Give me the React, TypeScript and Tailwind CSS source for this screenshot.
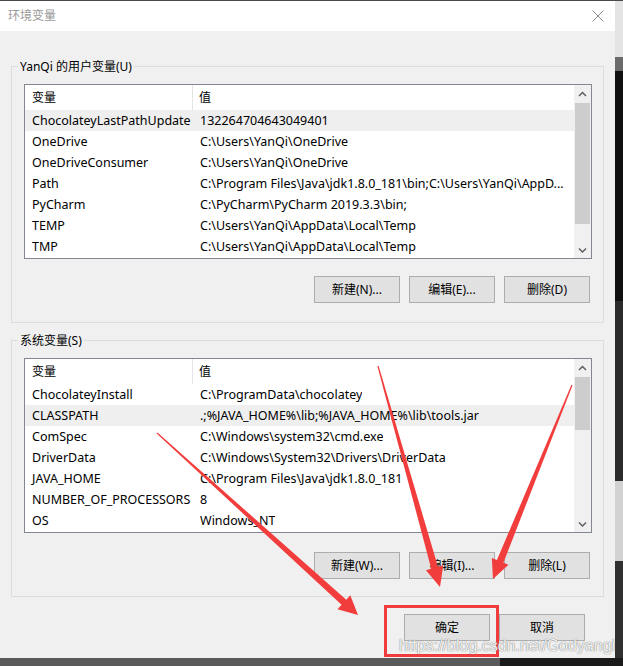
import React from "react";

type Row = [string, string];

const userVars: Row[] = [
  ["ChocolateyLastPathUpdate", "132264704643049401"],
  ["OneDrive", "C:\\Users\\YanQi\\OneDrive"],
  ["OneDriveConsumer", "C:\\Users\\YanQi\\OneDrive"],
  ["Path", "C:\\Program Files\\Java\\jdk1.8.0_181\\bin;C:\\Users\\YanQi\\AppD..."],
  ["PyCharm", "C:\\PyCharm\\PyCharm 2019.3.3\\bin;"],
  ["TEMP", "C:\\Users\\YanQi\\AppData\\Local\\Temp"],
  ["TMP", "C:\\Users\\YanQi\\AppData\\Local\\Temp"],
];

const systemVars: Row[] = [
  ["ChocolateyInstall", "C:\\ProgramData\\chocolatey"],
  ["CLASSPATH", ".;%JAVA_HOME%\\lib;%JAVA_HOME%\\lib\\tools.jar"],
  ["ComSpec", "C:\\Windows\\system32\\cmd.exe"],
  ["DriverData", "C:\\Windows\\System32\\Drivers\\DriverData"],
  ["JAVA_HOME", "C:\\Program Files\\Java\\jdk1.8.0_181"],
  ["NUMBER_OF_PROCESSORS", "8"],
  ["OS", "Windows_NT"],
];

// tapered shaft + triangle head, like a screenshot-tool arrow
function arrowPoints(x1: number, y1: number, x2: number, y2: number, w1: number, w2: number, hl: number, hw: number) {
  const dx = x2 - x1;
  const dy = y2 - y1;
  const len = Math.hypot(dx, dy);
  const ux = dx / len;
  const uy = dy / len;
  const nx = -uy;
  const ny = ux;
  const bx = x2 - ux * hl;
  const by = y2 - uy * hl;
  const pts = [
    [x1 + (nx * w1) / 2, y1 + (ny * w1) / 2],
    [bx + (nx * w2) / 2, by + (ny * w2) / 2],
    [bx + nx * hw, by + ny * hw],
    [x2, y2],
    [bx - nx * hw, by - ny * hw],
    [bx - (nx * w2) / 2, by - (ny * w2) / 2],
    [x1 - (nx * w1) / 2, y1 - (ny * w1) / 2],
  ];
  return pts.map((p) => p.join(",")).join(" ");
}

function Chevron({ down }: { down?: boolean }) {
  return (
    <svg width="9" height="6" viewBox="0 0 9 6">
      <path
        d={down ? "M1 1.5 L4.5 5 L8 1.5" : "M1 5 L4.5 1.5 L8 5"}
        fill="none"
        stroke="#606060"
        strokeWidth="1.5"
      />
    </svg>
  );
}

function VarList({ rows, selected, big }: { rows: Row[]; selected: number; big?: boolean }) {
  return (
    <div className="flex w-[568px] h-[175px] border border-[#828790] bg-white">
      <div className="flex-1 flex flex-col">
        <div className="flex h-[25px] leading-[25px]">
          <div className="w-[168px] pl-[7px] border-r border-[#e5e5e5]">变量</div>
          <div className="pl-[6px]">值</div>
        </div>
        {rows.map(([name, value], i) => (
          <div
            key={name}
            className={
              i === selected
                ? "flex h-[21px] leading-[21px] text-[12.5px] bg-[#efefef]"
                : "flex h-[21px] leading-[21px] text-[12.5px]"
            }
          >
            <div className="w-[169px] pl-[7px] whitespace-nowrap overflow-hidden">{name}</div>
            <div className="pl-[6px] whitespace-nowrap overflow-hidden">{value}</div>
          </div>
        ))}
      </div>
      <div className="w-[17px] flex flex-col bg-[#f0f0f0]">
        <div className="h-[17px] flex items-center justify-center">
          <Chevron />
        </div>
        <div className="flex-1 pt-[1px] px-[1px]">
          <div className={big ? "h-[121px] bg-[#cdcdcd]" : "h-[53px] bg-[#cdcdcd]"} />
        </div>
        <div className="h-[17px] flex items-center justify-center">
          <Chevron down />
        </div>
      </div>
    </div>
  );
}

function Btn({ children }: { children: React.ReactNode }) {
  return (
    <div className="w-[86px] h-[27px] flex items-center justify-center bg-[#e1e1e1] border border-[#adadad]">
      {children}
    </div>
  );
}

function GroupBox({ label, lower, children }: { label: string; lower?: boolean; children: React.ReactNode }) {
  return (
    <div className={lower ? "relative border border-[#dcdcdc] pt-[17px] pb-[17px] pl-[12px]" : "relative border border-[#dcdcdc] pt-[17px] pb-[19px] pl-[12px]"}>
      <span className="absolute -top-[8px] left-[6px] px-[2px] leading-[16px] bg-[#f0f0f0]">{label}</span>
      {children}
    </div>
  );
}

export default function App() {
  return (
    <div className="relative w-[623px] h-[666px] overflow-hidden flex flex-col bg-[#3a3a3a] text-[12px] text-black font-['Noto_Sans','Noto_Sans_CJK_SC',sans-serif]">
      <div className="h-[1px] bg-[#4a4a4a]" />
      <div className="flex">
        {/* dialog */}
        <div className="w-[615px] h-[657px] flex flex-col bg-[#f0f0f0]">
          <div className="h-[30px] bg-white flex items-center justify-between pl-[8px] pr-[11px]">
            <span className="text-[#999999]">环境变量</span>
            <svg width="12" height="12" viewBox="0 0 12 12">
              <path d="M0.5 0.5 L11.5 11.5 M11.5 0.5 L0.5 11.5" stroke="#8a8a8a" strokeWidth="1" />
            </svg>
          </div>
          <div className="flex-1 px-[11px] pt-[35px]">
            <GroupBox label="YanQi 的用户变量(U)">
              <VarList rows={userVars} selected={0} big />
              <div className="w-[568px] flex justify-end gap-[9px] pr-[2px] mt-[17px]">
                <Btn>新建(N)...</Btn>
                <Btn>编辑(E)...</Btn>
                <Btn>删除(D)</Btn>
              </div>
            </GroupBox>
            <div className="h-[17px]" />
            <GroupBox label="系统变量(S)" lower>
              <VarList rows={systemVars} selected={1} />
              <div className="w-[568px] flex justify-end gap-[9px] pr-[2px] mt-[19px]">
                <Btn>新建(W)...</Btn>
                <Btn>编辑(I)...</Btn>
                <Btn>删除(L)</Btn>
              </div>
            </GroupBox>
            <div className="flex justify-end gap-[9px] pr-[19px] mt-[17px]">
              <Btn>确定</Btn>
              <Btn>取消</Btn>
            </div>
          </div>
        </div>
        {/* blurred desktop behind the dialog */}
        <div className="flex-1 flex flex-col">
          <div className="h-[56px] bg-[#e4e4e4]" />
          <div className="h-[14px] bg-[#6a6a6a]" />
          <div className="h-[230px] bg-[#101010]" />
          <div className="h-[180px] bg-[#2a2a2a]" />
          <div className="h-[80px] bg-[#d2d2d2]" />
          <div className="flex-1 bg-[#303030]" />
        </div>
      </div>
      <div className="flex-1 flex">
        <div className="w-[500px] bg-[#5a5a5a]" />
        <div className="flex-1 bg-[#1a1a1a]" />
      </div>

      {/* annotation overlay */}
      <svg className="absolute inset-0 pointer-events-none" width="623" height="666" viewBox="0 0 623 666">
        <polygon points={arrowPoints(157, 433, 358, 615, 1.2, 7, 19, 9.5)} fill="#f23d3d" />
        <polygon points={arrowPoints(378, 366, 440, 587, 1.2, 7, 20, 9)} fill="#f23d3d" />
        <polygon points={arrowPoints(572, 385, 493, 579, 1.2, 7, 19, 9)} fill="#f23d3d" />
      </svg>
      <div className="absolute left-[384px] top-[605px] w-[115px] h-[52px] border-[3px] border-[#f03c3c]" />
      <div className="absolute left-[399px] top-[637px] leading-[18px] text-[16px] text-white/90 font-['Liberation_Sans',sans-serif] [text-shadow:0_0_1px_#808080,0_0_1px_#808080]">
        https://blog.csdn.net/Godyangi
      </div>
    </div>
  );
}
